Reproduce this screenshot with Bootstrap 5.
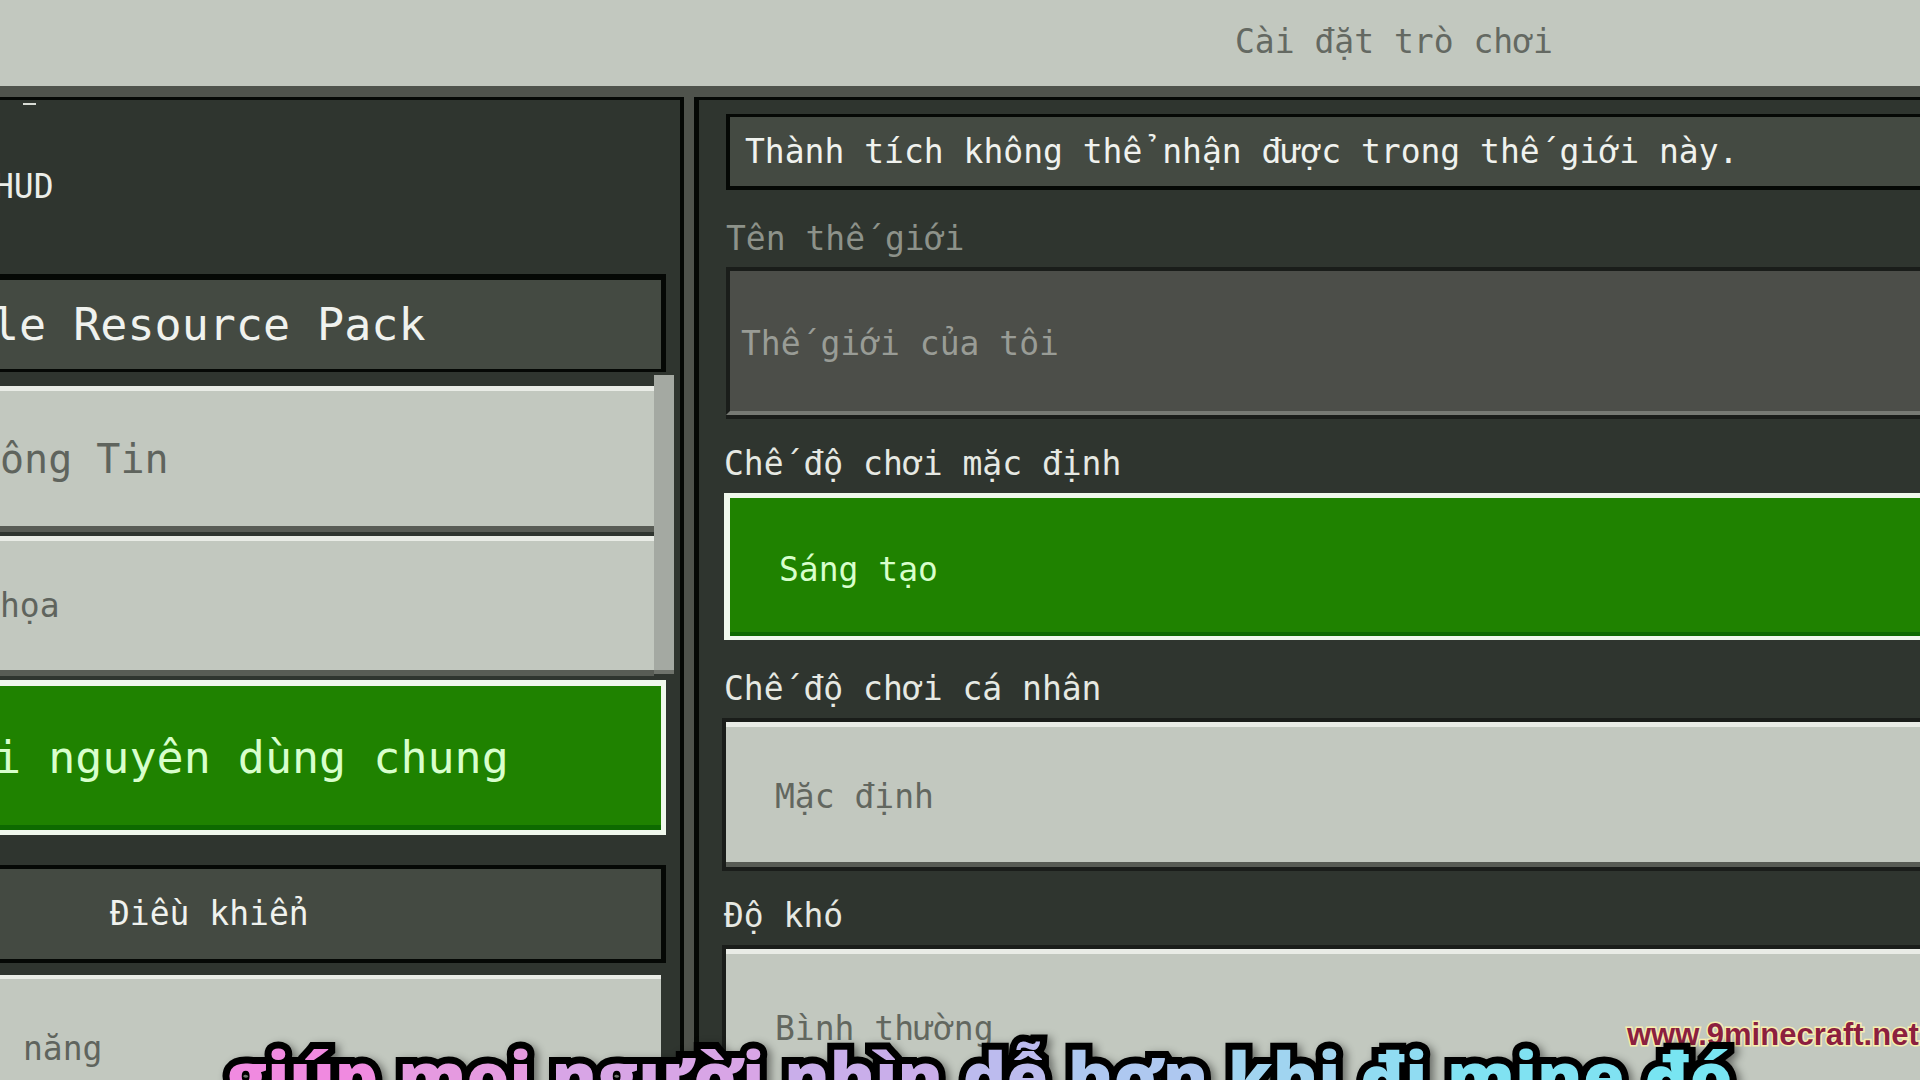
<!DOCTYPE html>
<html lang="vi">
<head>
  <meta charset="UTF-8" />
  <title>Cài đặt trò chơi</title>
  <link href="https://cdn.jsdelivr.net/npm/bootstrap@5.3.3/dist/css/bootstrap.min.css" rel="stylesheet">
  <style>
    html, body { height: 100%; }
    body { width: 1920px; height: 1080px; overflow: hidden; position: relative; background: #2f352f; font-family: "DejaVu Sans Mono", "Liberation Mono", monospace; font-size: 33px; line-height: 40px; }
    .game-top { height: 86px; background: #c2c8bf; color: #646962; padding-left: 1235px; padding-top: 22px; }
    .game-strip { height: 11px; background: #4f534c; }
    .game-main { height: 983px; }
    .left-pane { width: 684px; flex: none; background: #2f352f; border-top: 3px solid #050805; border-right: 4px solid #050805; position: relative; overflow: hidden; }
    .mid-strip { width: 10px; flex: none; background: #4f534c; }
    .right-pane { flex: 1 1 auto; min-width: 0; background: #2f352f; border-top: 3px solid #050805; border-left: 5px solid #050805; padding-left: 27px; overflow: hidden; }

    .top-dash { position: absolute; left: 23px; top: 3px; width: 13px; height: 2px; background: #d8dbd5; }
    .hud-row { height: 174px; color: #eceee9; }
    .hud-row span { margin-left: -6px; }

    .tab { display: flex; align-items: center; white-space: nowrap; overflow: hidden; }
    .tab-dark { background: #444a42; color: #f0f2ee; border: 0 solid #050805; border-width: 4px 5px 4px 0; margin-right: 14px; }
    .tab-light { background: #c2c8bf; color: #5f645d; border-top: 5px solid #e9ece6; border-bottom: 6px solid #585c55; margin-right: 26px; }
    .tab-big { font-size: 45px; }
    .tab-mid { font-size: 40px; }
    .tab-on { height: 155px; background: #1f8200; color: #d8ffcc; border: 0 solid #f0f8ec; border-width: 6px 5px 5px 0; box-shadow: inset 0 -5px 0 #0e6a00; margin: 4px 14px 0 0; }

    .tab-pack { height: 98px; border-top-width: 6px; border-bottom-width: 3px; }
    .tab-pack span { margin-left: -8px; }
    .tab-info { height: 146px; margin-top: 14px; }
    .tab-gfx { height: 140px; margin-top: 4px; }
    .tab-ctrl { height: 98px; margin-top: 30px; padding-left: 110px; }
    .tab-feat { height: 200px; margin: 12px 19px 0 0; padding: 0 0 0 23px; align-items: flex-start; border-bottom: 0; border-top-width: 4px; }
    .tab-feat span { margin-top: 50px; }
    .tab-green span { margin-left: -6px; }

    .side-thumb { position: absolute; left: 654px; top: 275px; width: 20px; height: 299px; background: #a4a9a2; border-bottom: 4px solid #6f736c; }

    .notice { height: 76px; margin-top: 14px; background: #444a42; color: #f0f2ee; border: 0 solid #050805; border-width: 3px 0 4px 4px; padding-left: 15px; }
    .field-label { margin: 29px 0 9px -2px; color: #e6e9e3; }
    .field-label.dim { color: #8d928a; margin-bottom: 8px; margin-left: 0; }
    .field { padding-top: 5px; white-space: nowrap; }
    .field-input { height: 148px; background: #4c4e49; color: #999c96; border-top: 4px solid #1a1d1a; border-left: 4px solid #1a1d1a; border-bottom: 4px solid #777a74; box-shadow: 0 4px 0 #1a1d1a; padding-left: 11px; }
    .field-on { height: 147px; margin-left: -2px; background: #1f8200; color: #d8ffcc; border: 0 solid #f0f8ec; border-width: 5px 0 4px 6px; box-shadow: inset 0 -4px 0 #0e6a00; padding-left: 49px; }
    .field-drop { height: 145px; background: #c2c8bf; color: #62675f; border-top: 5px solid #e9ece6; border-left: 0; border-bottom: 5px solid #585c55; padding-left: 49px; outline: 4px solid #1a1d1a; outline-offset: 0; }
    .field-last { height: 200px; padding-top: 55px; align-items: flex-start !important; border-bottom: 0; }
    .field-drop { margin-top: 13px; }

    .mark-site { position: absolute; left: 1627px; top: 1018px; font-family: "Liberation Sans Narrow", "Liberation Sans", sans-serif; font-weight: 700; font-size: 31px; line-height: 34px; color: #8c1f3f; -webkit-text-stroke: 3px #f7eeb0; paint-order: stroke fill; white-space: nowrap; }
    .sub-line { position: absolute; left: 226px; top: 1030px; font-family: "Open Sans", "Liberation Sans", sans-serif; font-weight: 800; font-size: 68px; line-height: 90px; word-spacing: 2px; -webkit-text-stroke: 14px #000; paint-order: stroke fill; white-space: nowrap; filter: drop-shadow(4px 3px 4px rgba(0,0,0,.45)); }
  </style>
</head>
<body>
  <div class="game-top">Cài đặt trò chơi</div>
  <div class="game-strip"></div>

  <div class="game-main d-flex">
    <!-- left menu -->
    <div class="left-pane">
      <div class="top-dash"></div>
      <div class="hud-row d-flex align-items-center"><span>HUD</span></div>
      <div class="tab tab-dark tab-pack tab-big"><span>le Resource Pack</span></div>
      <div class="tab tab-light tab-info tab-mid"><span>ông Tin</span></div>
      <div class="tab tab-light tab-gfx"><span>họa</span></div>
      <div class="tab tab-on tab-green tab-big"><span>i nguyên dùng chung</span></div>
      <div class="tab tab-dark tab-ctrl"><span>Điều khiển</span></div>
      <div class="tab tab-light tab-feat"><span>năng</span></div>
      <div class="side-thumb"></div>
    </div>

    <div class="mid-strip"></div>

    <!-- world settings -->
    <div class="right-pane">
      <div class="notice d-flex align-items-center">Thành tích không thể nhận được trong thế giới này.</div>

      <div class="field-label dim">Tên thế giới</div>
      <div class="field field-input d-flex align-items-center">Thế giới của tôi</div>

      <div class="field-label">Chế độ chơi mặc định</div>
      <div class="field field-on d-flex align-items-center">Sáng tạo</div>

      <div class="field-label">Chế độ chơi cá nhân</div>
      <div class="field field-drop d-flex align-items-center">Mặc định</div>

      <div class="field-label">Độ khó</div>
      <div class="field field-drop field-last d-flex">Bình thường</div>
    </div>
  </div>

  <div class="mark-site">www.9minecraft.net</div>
  <div class="sub-line"><span style="color:#f08ae0">giúp</span> <span style="color:#e59ae0">mọi</span> <span style="color:#d8a5e6">người</span> <span style="color:#c9aeea">nhìn</span> <span style="color:#bcbbee">dễ</span> <span style="color:#aec8f0">hơn</span> <span style="color:#a0d4f0">khi</span> <span style="color:#90dcf2">đi</span> <span style="color:#80e2f2">mine</span> <span style="color:#78e5f2">đó</span></div>

  <script src="https://cdn.jsdelivr.net/npm/bootstrap@5.3.3/dist/js/bootstrap.bundle.min.js"></script>
</body>
</html>
